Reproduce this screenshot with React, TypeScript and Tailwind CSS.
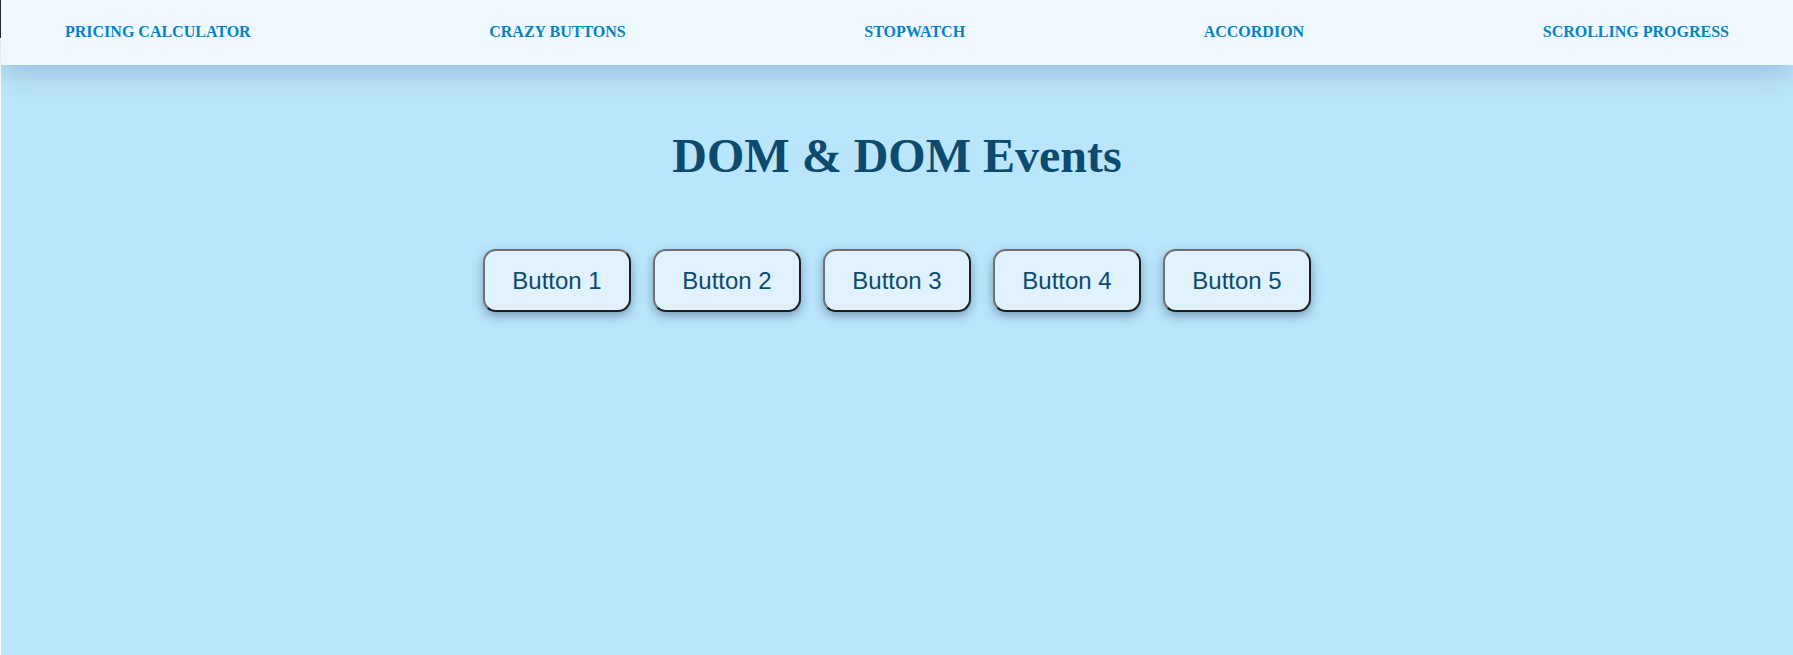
import React from "react";

const links = ["Pricing Calculator", "Crazy Buttons", "Stopwatch", "Accordion", "Scrolling Progress"];
const buttons = ["Button 1", "Button 2", "Button 3", "Button 4", "Button 5"];

export default function App() {
  return (
    <div className="flex min-h-screen bg-white">
      <div className="flex w-[1px] shrink-0 flex-col">
        <div className="h-[38px] bg-[#2a2a2a]" />
      </div>
      <div className="flex min-h-screen flex-1 flex-col bg-[#bae6fd]">
        <nav className="relative z-10 flex h-[65px] items-center justify-between bg-[#f0f9ff] px-16 pb-[2px] shadow-[0_8px_30px_rgba(0,40,70,0.2)]">
          {links.map((l) => (
            <a
              key={l}
              className="text-[16px] font-bold uppercase text-[#0284c7]"
              style={{ fontFamily: '"Liberation Serif", "Times New Roman", serif' }}
            >
              {l}
            </a>
          ))}
        </nav>
        <main className="flex flex-col items-center pt-[63px]">
          <h1
            className="text-[48px] font-bold leading-[55px] text-[#0c4a6e]"
            style={{ fontFamily: '"Liberation Serif", "Times New Roman", serif' }}
          >
            DOM &amp; DOM Events
          </h1>
          <div className="mt-[66px] flex gap-[22px]">
            {buttons.map((b) => (
              <button
                key={b}
                className="flex h-[63px] w-[148px] items-center justify-center rounded-[13px] border-2 border-b-[#1c1c1c] border-l-[#707070] border-r-[#1c1c1c] border-t-[#707070] bg-[#e0f2fe] text-[24px] text-[#0c4a6e] shadow-[0_4px_11px_rgba(0,40,70,0.38)]"
                style={{ fontFamily: '"Liberation Sans", Arial, sans-serif' }}
              >
                {b}
              </button>
            ))}
          </div>
        </main>
      </div>
    </div>
  );
}
